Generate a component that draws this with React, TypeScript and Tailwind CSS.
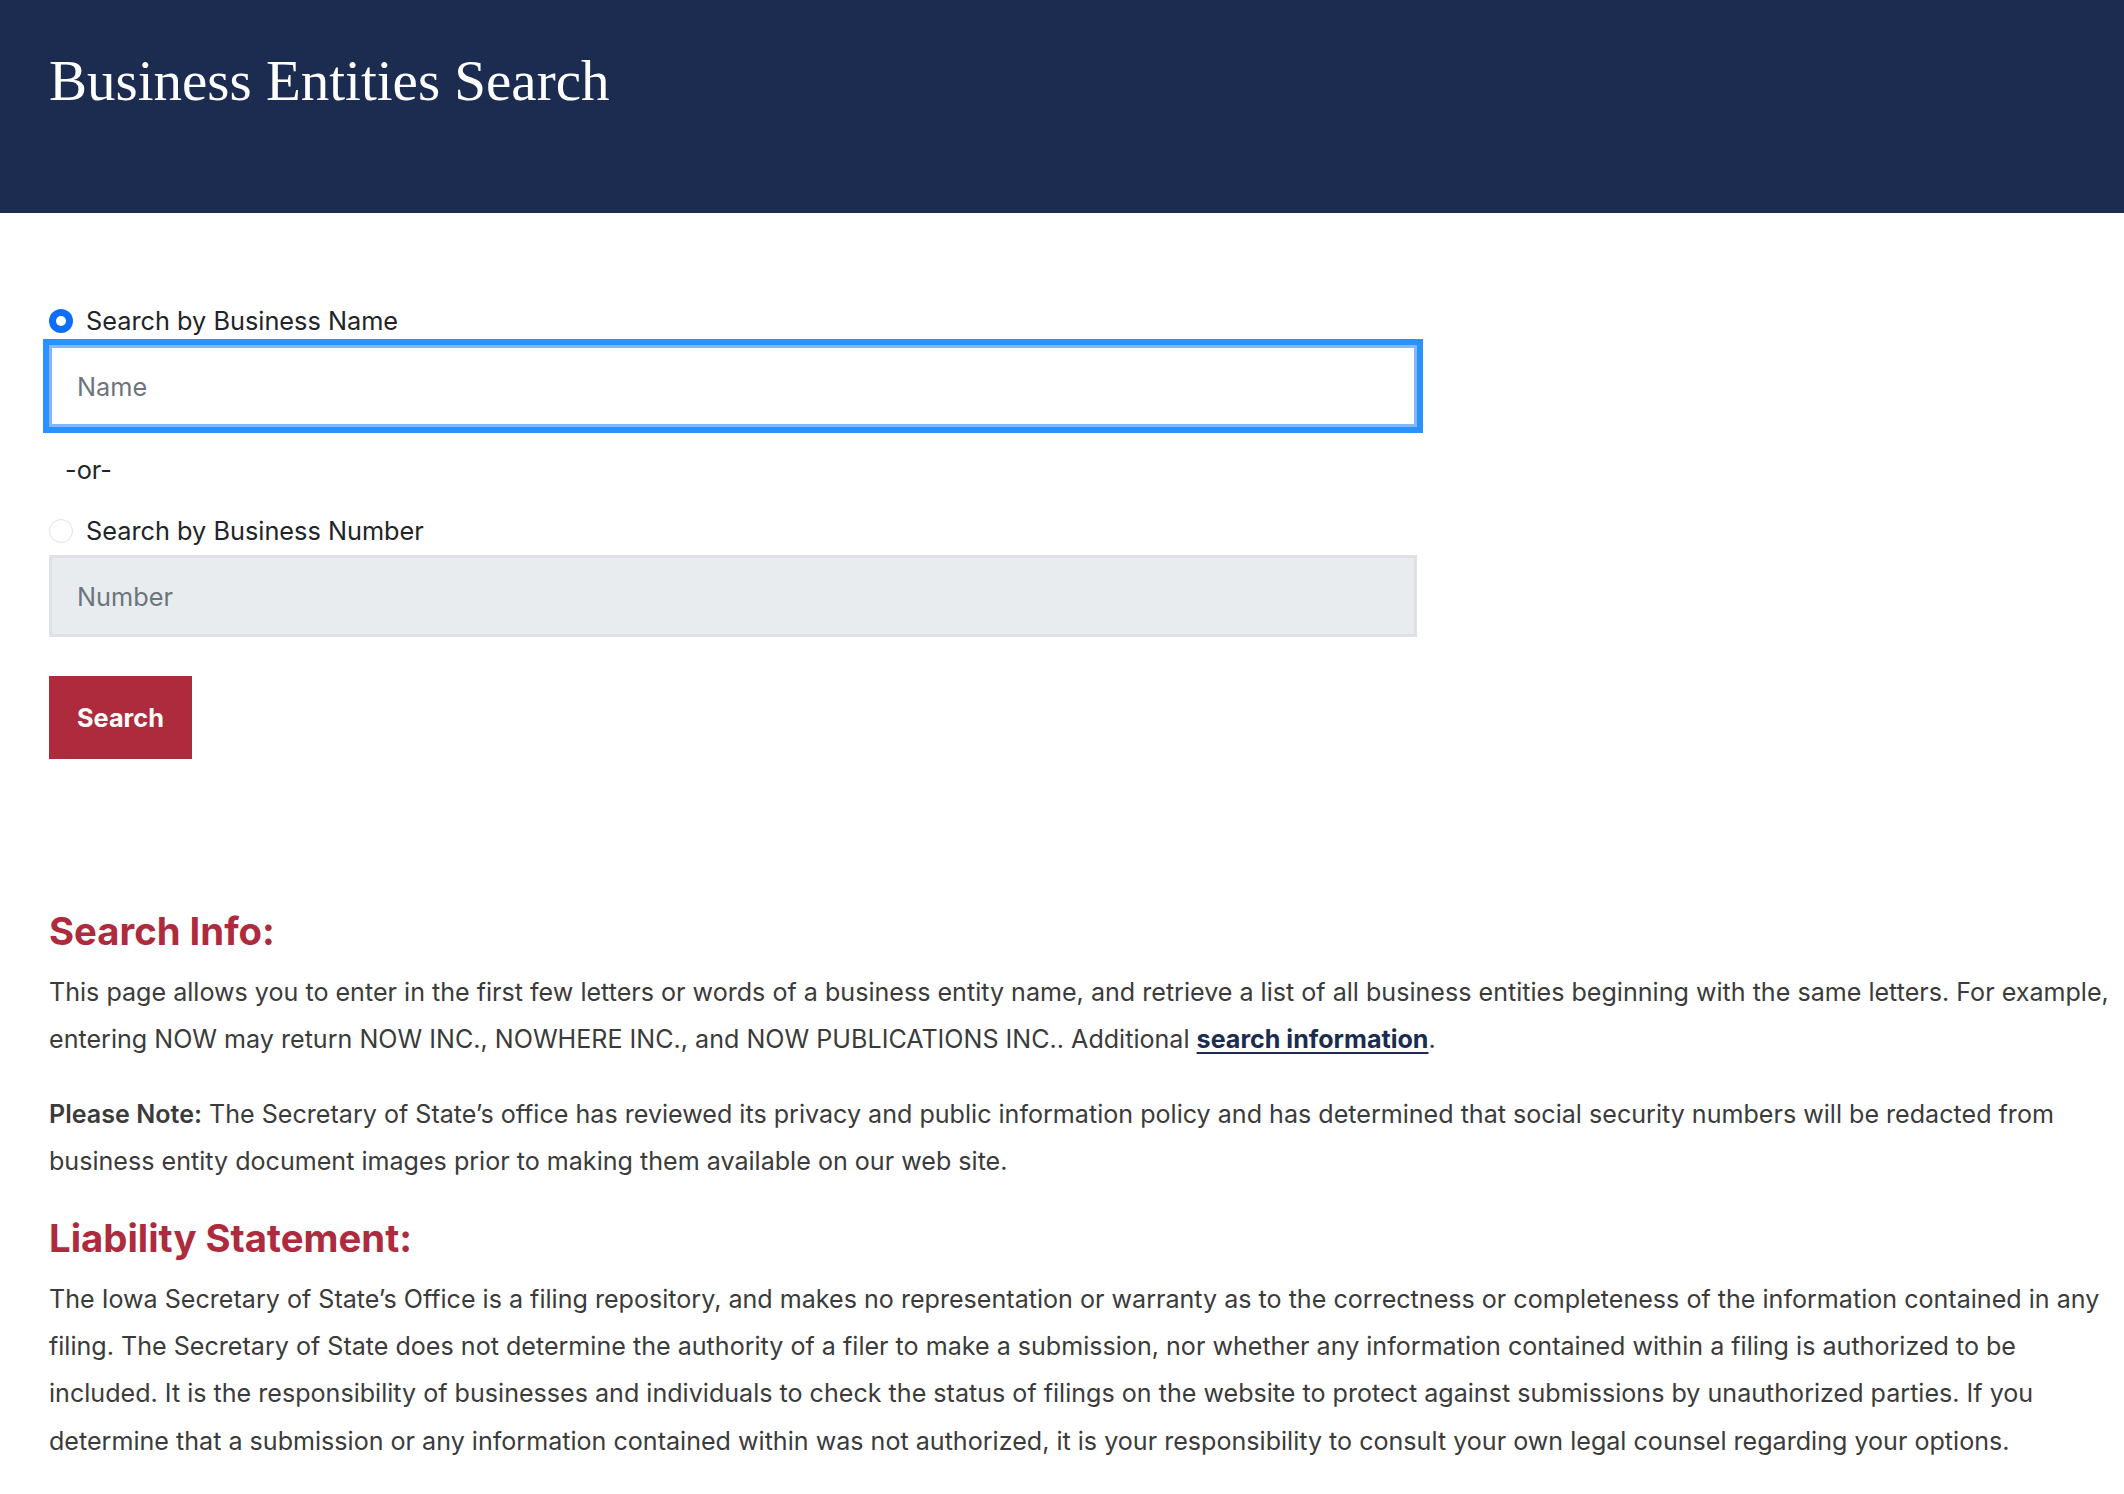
import React from "react";

export default function App() {
  return (
    <div className="min-h-[1494px] bg-white font-['Inter',sans-serif]">
      <header className="h-[213px] bg-[#1b2c50] px-[49px] pt-[46px]">
        <h1 className="font-['Liberation_Serif',serif] text-[57px] leading-[70px] text-white font-normal">
          Business Entities Search
        </h1>
      </header>
      <main className="pl-[49px] pr-0">
        <div className="mt-[93px] flex h-[30px] items-center gap-[13px] text-[25.3px] text-[#212529]">
          <span className="flex h-[24px] w-[24px] items-center justify-center rounded-full bg-[#0d6efd]">
            <span className="h-[10px] w-[10px] rounded-full bg-white" />
          </span>
          <span>Search by Business Name</span>
        </div>
        <input
          placeholder="Name"
          className="mt-[9px] block h-[82px] w-[1368px] border-[3px] border-[#86b7fe] bg-white px-[25px] text-[25.3px] text-[#212529] placeholder:text-[#6c757d] shadow-[0_0_0_6px_#2893ff] outline-none"
        />
        <div className="mt-[25px] h-[36px] pl-[16px] text-[25.3px] leading-[36px] text-[#212529]">-or-</div>
        <div className="mt-[28px] flex h-[30px] items-center gap-[13px] text-[25.3px] text-[#212529]">
          <span className="h-[24px] w-[24px] rounded-full border-[1.5px] border-[#dee2e6] bg-white" />
          <span>Search by Business Number</span>
        </div>
        <input
          placeholder="Number"
          disabled
          className="mt-[9px] block h-[82px] w-[1368px] border-[3px] border-[#dee2e6] bg-[#e9ecef] px-[25px] text-[25.3px] text-[#212529] placeholder:text-[#6c757d] outline-none"
        />
        <button className="mt-[39px] flex h-[83px] w-[143px] items-center justify-center bg-[#ad2b3d] text-[25.3px] font-bold text-white">
          Search
        </button>

        <h2 className="mt-[148px] text-[38.3px] leading-[48px] font-bold text-[#ad2b3d]">Search Info:</h2>
        <p className="mt-[14px] text-[25.1px] leading-[47.4px] text-[#3b3b3b]">
          This page allows you to enter in the first few letters or words of a business entity name, and retrieve a list of all business entities beginning with the same letters. For example, entering NOW may return NOW INC., NOWHERE INC., and NOW PUBLICATIONS INC.. Additional{" "}
          <a href="#" className="font-bold text-[#1b2c50] underline underline-offset-[4px]">search information</a>.
        </p>
        <p className="mt-[27px] text-[25.1px] leading-[47.4px] text-[#3b3b3b]">
          <span className="font-semibold">Please Note:</span> The Secretary of State’s office has reviewed its privacy and public information policy and has determined that social security numbers will be redacted from business entity document images prior to making them available on our web site.
        </p>
        <h2 className="mt-[28px] text-[38.3px] leading-[48px] font-bold text-[#ad2b3d]">Liability Statement:</h2>
        <p className="mt-[14px] text-[25.1px] leading-[47.4px] text-[#3b3b3b]">
          The Iowa Secretary of State’s Office is a filing repository, and makes no representation or warranty as to the correctness or completeness of the information contained in any filing. The Secretary of State does not determine the authority of a filer to make a submission, nor whether any information contained within a filing is authorized to be included. It is the responsibility of businesses and individuals to check the status of filings on the website to protect against submissions by unauthorized parties. If you determine that a submission or any information contained within was not authorized, it is your responsibility to consult your own legal counsel regarding your options.
        </p>
      </main>
    </div>
  );
}
